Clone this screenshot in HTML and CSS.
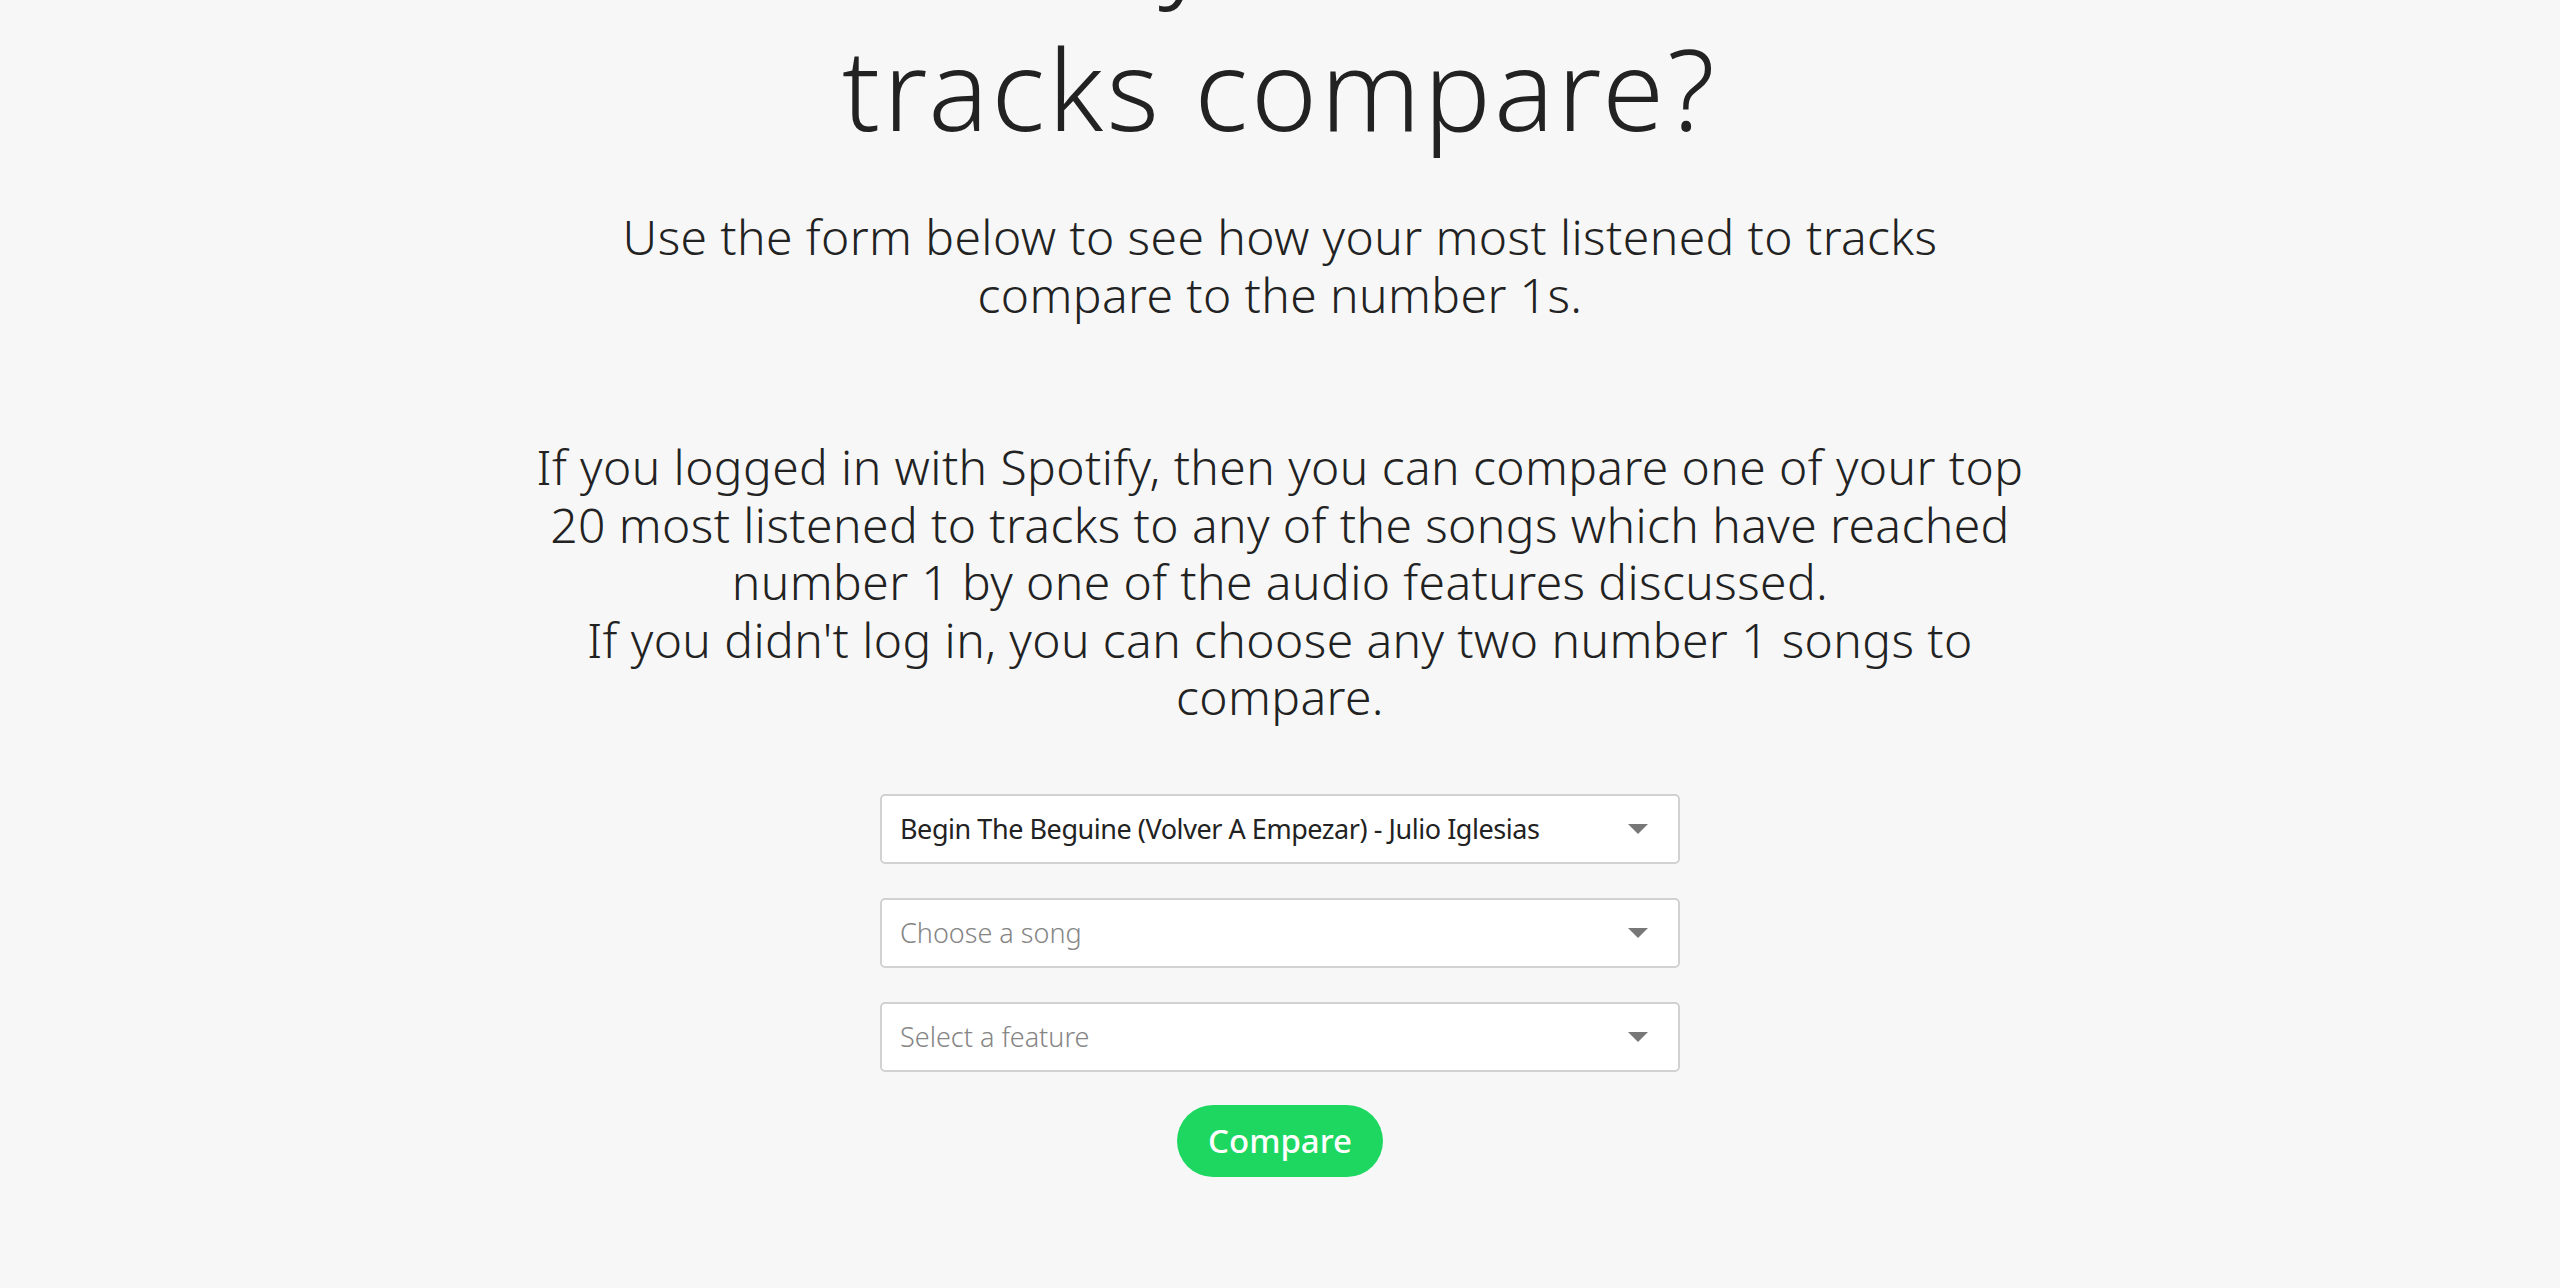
FILE: index.html
```html
<!DOCTYPE html>
<html lang="en">
<head>
<meta charset="utf-8">
<title>How do your tracks compare?</title>
<link rel="stylesheet" href="styles.css">
</head>
<body>
<main class="page">
  <h1 class="title">How do<br>your<br>tracks compare?</h1>
  <p class="lead">Use the form below to see how your most listened to tracks compare to the number 1s.</p>
  <p class="info">If you logged in with Spotify, then you can compare one of your top 20 most listened to tracks to any of the songs which have reached number 1 by one of the audio features discussed.<br>If you didn't log in, you can choose any two number 1 songs to compare.</p>
  <form class="form">
    <div class="select">
      <span class="select-value">Begin The Beguine (Volver A Empezar) - Julio Iglesias</span>
      <span class="arrow"></span>
    </div>
    <div class="select">
      <span class="select-value placeholder">Choose a song</span>
      <span class="arrow"></span>
    </div>
    <div class="select">
      <span class="select-value placeholder">Select a feature</span>
      <span class="arrow"></span>
    </div>
    <button type="button" class="btn">Compare</button>
  </form>
</main>
</body>
</html>
```
FILE: styles.css
```css
html, body {
  margin: 0;
  padding: 0;
  background: #f7f7f7;
  color: #222222;
  font-family: "Noto Sans", "Open Sans", sans-serif;
  font-weight: 300;
  overflow: hidden;
}

.page {
  display: flex;
  flex-direction: column;
  align-items: center;
  text-align: center;
}

.title {
  margin: -277px 0 0;
  font-size: 112px;
  font-weight: 300;
  line-height: 146px;
  letter-spacing: 3.2px;
  white-space: nowrap;
}

.lead {
  margin: 47px 0 0;
  max-width: 1520px;
  font-size: 48px;
  line-height: 58px;
  letter-spacing: 0.4px;
}

.info {
  margin: 114px 0 0;
  max-width: 1520px;
  font-size: 48px;
  line-height: 57.5px;
  letter-spacing: 0.4px;
}

.form {
  margin-top: 68px;
  display: flex;
  flex-direction: column;
  align-items: center;
  gap: 34px;
}

.select {
  box-sizing: border-box;
  width: 800px;
  height: 70px;
  background: #ffffff;
  border: 2px solid #d2d2d2;
  border-radius: 5px;
  display: flex;
  align-items: center;
  justify-content: space-between;
  padding: 0 30px 0 18px;
}

.select-value {
  font-size: 27px;
  font-weight: 400;
  color: #222222;
  white-space: nowrap;
  letter-spacing: -0.45px;
}

.placeholder {
  font-weight: 300;
  letter-spacing: 0;
  color: #858585;
}

.arrow {
  width: 0;
  height: 0;
  border-left: 10px solid transparent;
  border-right: 10px solid transparent;
  border-top: 10px solid #777777;
}

.btn {
  margin-top: -1px;
  width: 206px;
  height: 72px;
  border: none;
  border-radius: 36px;
  background: #1ed760;
  color: #ffffff;
  font-family: "Noto Sans", "Open Sans", sans-serif;
  font-size: 33px;
  font-weight: 500;
  padding: 0;
  cursor: pointer;
}
```
